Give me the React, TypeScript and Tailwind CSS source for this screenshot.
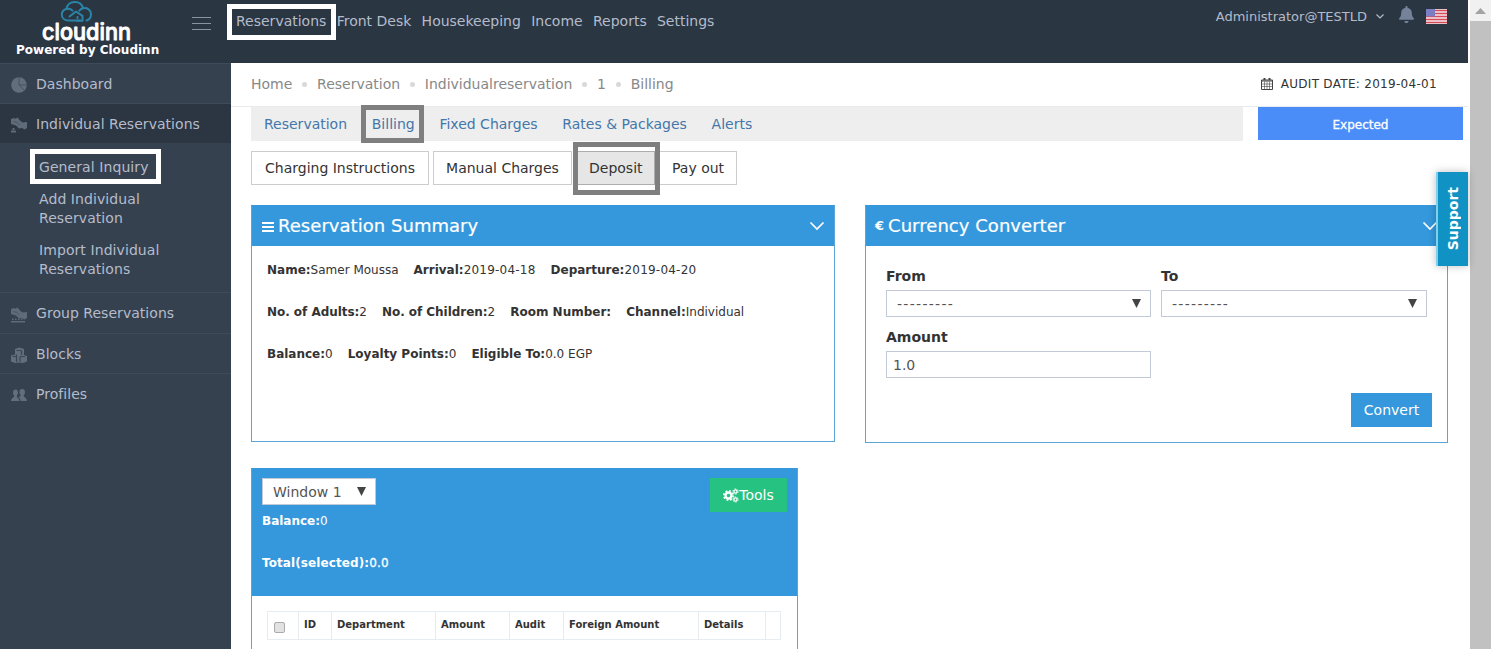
import { FaBell } from "react-icons/fa"

const navLinks = ["Reservations", "Front Desk", "Housekeeping", "Income", "Reports", "Settings"]
const crumbs = ["Home", "Reservation", "Individualreservation", "1", "Billing"]
const tabs = ["Reservation", "Billing", "Fixed Charges", "Rates & Packages", "Alerts"]

const summary = [
    [["Name:", "Samer Moussa"], ["Arrival:", "2019-04-18"], ["Departure:", "2019-04-20"]],
    [["No. of Adults:", "2"], ["No. of Children:", "2"], ["Room Number:", ""], ["Channel:", "Individual"]],
    [["Balance:", "0"], ["Loyalty Points:", "0"], ["Eligible To:", "0.0 EGP"]],
]

function Logo() {
    return (
        <svg width="100" height="43" viewBox="0 0 100 43" className="block overflow-visible">
            <g fill="none" stroke="#2a84a8" strokeWidth="2" strokeLinecap="round" strokeLinejoin="round">
                <path d="M45 20.500H33.500C29.500 20.500 26.800 18 26.800 14.800c0-3 2-5.200 4.800-5.800C32 4.700 35.500 2 39.800 2c4.200 0 7.200 2.300 8.300 6.200 4.300-.8 7.900 1.800 7.900 6 0 3.200-1.800 5.500-4.500 6.300" />
                <path d="M31.500 9c2.300-.6 4.500 0 6 1.700" />
                <path d="M48.100 8.200c-1.600.4-2.900 1.200-3.800 2.500" />
                <path d="M34.500 16.500l6.500-5 6.500 4.300v5H42" />
                <path d="M42.500 17v1" />
            </g>
            <text x="7" y="39.500" textLength="89" lengthAdjust="spacingAndGlyphs" fill="#fff" stroke="#fff" strokeWidth=".9" strokeLinejoin="round" fontFamily="Inter, sans-serif" fontWeight="500" fontSize="22.500">cloudinn</text>
        </svg>
    )
}

function Chevron(props: any) {
    return (
        <svg width="16" height="10" viewBox="0 0 16 10" className={props.className}>
            <path d="M1.500 1.500l6.500 6.500 6.500-6.500" fill="none" stroke="#fff" strokeWidth="1.700" />
        </svg>
    )
}

function PieIcon() {
    return (
        <svg width="16" height="16" viewBox="0 0 16 16">
            <circle cx="8" cy="8" r="7.800" fill="#626e7b" />
            <path d="M8 0v8l5.500 5.500M8 8h8" fill="none" stroke="#465260" strokeWidth="1" />
        </svg>
    )
}

function HandshakeIcon(props: any) {
    return (
        <svg width="16" height="16" viewBox="0 0 16 16" fill="#5f6b78">
            <path d="M0 2l3-1 1.500.8L6.500.5l2.500 3 2.500 2L16 5v6l-2.500 1.500-2.500-1.500-3 .5-3-3L0 7z" />
            <path d="M2.500 4.500l3.500 1 2.500 2.500" fill="none" stroke="#44505e" strokeWidth=".8" />
            {props.group
                ? <path d="M1 11.500h1.500V13H1zm3 0h1.500V13H4zm3 0h1.500V13H7zm3 0h1.500V13H10zM0 14h14v1.500H0z" />
                : <path d="M1.500 11h2v2h-2zM0 13.500h5v2H0z" />}
        </svg>
    )
}

function CubesIcon() {
    return (
        <svg width="16" height="16" viewBox="0 0 16 16">
            <path d="M4 2l4-1.500L13 2v6l3 1v5.500L12 16l-4-.5-4 .5-4-1.500V8.500l4-1z" fill="#626e7b" />
            <path d="M5.500 3.500h5M10.500 3.500V8M5.500 7.500V15M1.500 9.500h4M9 9.500v5M9 9.500h5" fill="none" stroke="#3b4654" strokeWidth="1.200" />
        </svg>
    )
}

function UsersIcon() {
    return (
        <svg width="16" height="12" viewBox="0 0 16 12" fill="#626e7b">
            <path d="M2 3.500C2 1.500 3 .5 4.500.5S7 1.500 7 3.500c0 1.500-.7 2.500-1.200 3 0 2.500 2.200 2 2.700 5.500H0c0-3 3.200-3 3.200-5.500C2.500 6 2 5 2 3.500z" />
            <path d="M8.500 3c0-2 1-3 2.700-3S14 1 14 3c0 1.600-.7 2.800-1.300 3.300 0 2.700 3.300 2.200 3.300 5.700H9.500c0-2.500-1.500-3.200-2-4 1.500-.5 2.300-.7 2.300-1.700C9 5.800 8.500 4.600 8.500 3z" />
        </svg>
    )
}

function CogsIcon() {
    return (
        <svg width="16" height="15" viewBox="0 0 16 15" fill="none" stroke="#fff">
            <circle cx="5.500" cy="7.500" r="3" strokeWidth="2.400" />
            <circle cx="5.500" cy="7.500" r="4.700" strokeWidth="1.600" strokeDasharray="1.850 1.840" />
            <circle cx="12.500" cy="3.500" r="1.600" strokeWidth="1.300" />
            <circle cx="12.500" cy="3.500" r="2.600" strokeWidth="1" strokeDasharray="1.360 1.360" />
            <circle cx="12.500" cy="11.500" r="1.600" strokeWidth="1.300" />
            <circle cx="12.500" cy="11.500" r="2.600" strokeWidth="1" strokeDasharray="1.360 1.360" />
        </svg>
    )
}

function SideItem(props: any) {
    return (
        <div className={`flex items-center border-t border-[#3f4b5a] pl-[11px] ${props.className}`}>
            <span className="mr-[9px] w-4 pt-[3px]">{props.icon}</span>
            <span className="tracking-[0.040px]">{props.label}</span>
        </div>
    )
}

function PanelHeader(props: any) {
    return (
        <div className="flex h-10 items-center bg-[#3598dc] pl-[9px] pr-[9px] text-lg text-white">
            {props.icon}
            <span className="tracking-[0.040px] [-webkit-text-stroke:0.200px_white]">{props.title}</span>
            <Chevron className="ml-auto" />
        </div>
    )
}

function Select(props: any) {
    return (
        <div className={`flex h-[27px] items-center border border-[#c2cad8] bg-white pl-[10px] text-[#555] ${props.className}`}>
            <span>{props.children}</span>
            <svg width="9" height="9" viewBox="0 0 9 9" className="mb-px ml-auto"><path d="M0 0h9L4.500 9z" fill="#444" /></svg>
        </div>
    )
}

function Flag() {
    return (
        <svg width="21" height="15" viewBox="0 0 21 15">
            <path d="M0 0h21v15H0z" fill="#f6e9ea" />
            <path d="M0 1.500h21M0 4.500h21M0 7.500h21M0 10.500h21M0 13.500h21" stroke="#d34a5a" strokeWidth="1.500" />
            <path d="M0 0h9v7.500H0z" fill="#7d7dc4" />
        </svg>
    )
}

function Calendar() {
    return (
        <svg width="12" height="13" viewBox="0 0 12 13" fill="none" stroke="#444">
            <path d="M.5 3h11v9.500H.5zM.5 4h11" />
            <path d="M3.500 1v2M8.500 1v2" strokeWidth="2" />
            <path d="M3.500 4.500V12M6 4.500V12M8.500 4.500V12M1 7h10M1 9.500h10" strokeWidth=".6" />
        </svg>
    )
}

export default function App() {
    return (
        <div className="flex h-[649px] w-[1491px] overflow-hidden bg-white font-['DejaVu_Sans',Verdana,sans-serif] text-sm text-[#333]">
            <div className="relative flex w-[1468px] flex-col">
                <header className="flex h-[63px] shrink-0 bg-[#2b3643] text-[#b4bccb]">
                    <div className="w-[192px]">
                        <div className="pl-[35px]"><Logo /></div>
                        <div className="pl-4 text-xs/[15px] font-bold text-white">Powered by Cloudinn</div>
                    </div>
                    <div className="mt-[17px] flex w-[19px] flex-col gap-[5px]">
                        <span className="h-px bg-[#8995a3]" />
                        <span className="h-px bg-[#8995a3]" />
                        <span className="h-px bg-[#8995a3]" />
                    </div>
                    <nav className="ml-[25px] mt-[11px] flex h-5 gap-[10.300px] whitespace-nowrap">
                        {navLinks.map((link, i) => (
                            <span key={link} className="relative">
                                {link}
                                {i === 0 && <span className="absolute -left-[9px] -top-[7px] h-9 w-[109px] border-[5px] border-white" />}
                            </span>
                        ))}
                    </nav>
                    <div className="ml-auto mr-[21px] flex h-8 items-center text-[13px]">
                        <span className="mt-[2px]">Administrator@TESTLD</span>
                        <svg width="8" height="5" viewBox="0 0 8 5" className="ml-[9px]"><path d="M.5.5L4 4 7.500.5" fill="none" stroke="#b4bccb" strokeWidth="1.200" /></svg>
                        <FaBell className="mb-[3px] ml-[14px] h-[17px] w-[17px] text-[#75839a]" />
                        <span className="ml-[11px]"><Flag /></span>
                    </div>
                </header>

                <div className="flex flex-1">
                    <aside className="w-[231px] shrink-0 bg-[#364150] text-[#b4bccb]">
                        <SideItem label="Dashboard" icon={<PieIcon />} className="h-10" />
                        <SideItem label="Individual Reservations" icon={<HandshakeIcon />} className="h-10 bg-[#2c3542]" />
                        <div className="flex h-[149px] flex-col gap-[13px] pl-[39px] pt-[15px] leading-[19px] tracking-[0.080px]">
                            <div className="relative">
                                General Inquiry
                                <span className="absolute -left-[9px] -top-[9px] h-[35px] w-[131px] border-[5px] border-white" />
                            </div>
                            <div>Add Individual<br />Reservation</div>
                            <div>Import Individual<br />Reservations</div>
                        </div>
                        <SideItem label="Group Reservations" icon={<HandshakeIcon group />} className="h-[41px]" />
                        <SideItem label="Blocks" icon={<CubesIcon />} className="h-10" />
                        <SideItem label="Profiles" icon={<UsersIcon />} className="h-10" />
                    </aside>

                    <main className="flex-1">
                        <div className="flex h-11 items-center justify-between border-b border-[#e8ebee] pb-[2px] pl-5 pr-[31px] text-[#888]">
                            <div className="flex items-center">
                                {crumbs.map((crumb, i) => (
                                    <span key={crumb} className="flex items-center">
                                        {i > 0 && <span className="ml-[10px] mr-[9.700px] mt-[2px] h-[5px] w-[5px] rounded-full bg-[#d9d9d9]" />}
                                        {crumb}
                                    </span>
                                ))}
                            </div>
                            <div className="flex items-center text-xs tracking-[0.300px] text-[#333]">
                                <span className="mr-2"><Calendar /></span>
                                AUDIT DATE: 2019-04-01
                            </div>
                        </div>

                        <div className="flex h-[34px] pl-5">
                            <div className="flex w-[992px] items-center gap-[24.700px] bg-[#eee] pl-[13px] text-[#4477aa]">
                                {tabs.map((tab) => (
                                    <span key={tab} className="relative">
                                        {tab}
                                        {tab === "Billing" && <span className="absolute -left-[11px] -top-[9px] h-[38px] w-[63px] border-[5px] border-[#7f7f7f]" />}
                                    </span>
                                ))}
                            </div>
                            <div className="ml-[15px] flex h-[33px] w-[205px] items-center justify-center bg-[#4b8df8] pt-[2px] text-xs text-white [-webkit-text-stroke:0.300px_white]">Expected</div>
                        </div>

                        <div className="flex gap-1 whitespace-nowrap pl-5 pt-[10px] *:h-[34px] *:border *:px-3 *:leading-8">
                            <button className="w-[178px] border-[#ccc]">Charging Instructions</button>
                            <button className="w-[139px] border-[#ccc]">Manual Charges</button>
                            <button className="relative w-[79px] border-[#adadad] bg-[#e6e6e6]">
                                Deposit
                                <span className="absolute -left-1 -top-[10px] h-[53px] w-[87px] border-[5px] border-[#7f7f7f]" />
                            </button>
                            <button className="w-[78px] border-[#ccc]">Pay out</button>
                        </div>

                        <div className="flex items-start gap-[30px] pl-5 pt-5">
                            <section className="h-[237px] w-[584px] border border-[#5aa5d6] border-t-[#3598dc]">
                                <PanelHeader title="Reservation Summary" icon={
                                    <svg width="13" height="10" viewBox="0 0 13 10" className="mr-[4px] mt-px"><path d="M1 1h12M1 5h12M1 9h12" stroke="#fff" strokeWidth="2" /></svg>
                                } />
                                <div className="pl-[15px] pt-[3px] text-xs leading-[42px]">
                                    {summary.map((row, i) => (
                                        <div key={i} className="flex gap-[15px]">
                                            {row.map(([label, value]) => (
                                                <span key={label}>
                                                    <b className={label.startsWith("No.") ? "tracking-[-0.040px]" : ""}>{label}</b>
                                                    <span className={value.startsWith("2019") ? "tracking-[0.220px]" : ""}>{value}</span>
                                                </span>
                                            ))}
                                        </div>
                                    ))}
                                </div>
                            </section>

                            <section className="h-[238px] w-[583px] border border-[#5aa5d6] border-t-[#3598dc]">
                                <PanelHeader title="Currency Converter" icon={<b className="mr-[4px] text-[13px]">€</b>} />
                                <div className="grid grid-cols-[265px_266px] gap-x-[10px] px-5 pt-5">
                                    <b className="h-6">From</b>
                                    <b className="h-6">To</b>
                                    <Select className="pr-[9px]"><span className="tracking-[1.300px]">---------</span></Select>
                                    <Select className="pr-[9px]"><span className="tracking-[1.300px]">---------</span></Select>
                                    <b className="mt-[10px] h-6">Amount</b>
                                    <span />
                                    <div className="h-[27px] border border-[#c2cad8] pl-[6px] leading-[26px] text-[#555]">1.0</div>
                                </div>
                                <button className="ml-auto mr-[15px] mt-[15px] block h-[34px] w-[81px] bg-[#3598dc] text-white">Convert</button>
                            </section>
                        </div>

                        <section className="ml-5 mt-[25px] h-[220px] w-[547px] border border-[#5aa5d6] border-t-[#3598dc]">
                            <div className="flex h-[127px] justify-between bg-[#3598dc] px-[10px] pt-[9px] text-xs text-white">
                                <div>
                                    <Select className="w-[114px] pr-[9px] text-sm">Window 1</Select>
                                    <div className="mt-[8px]"><b>Balance:</b>0</div>
                                    <div className="mt-[26px]"><b className="tracking-[0.100px]">Total(selected):</b><span className="tracking-[0.200px] [-webkit-text-stroke:0.300px_white]">0.0</span></div>
                                </div>
                                <button className="flex h-[34px] w-[77px] items-center justify-center bg-[#26c281] text-sm">
                                    <CogsIcon />Tools
                                </button>
                            </div>
                            <table className="ml-[15px] mt-[15px] w-[514px] table-fixed border-collapse text-left text-[10px] *:*:*:border *:*:*:border-[#e7ecf1]">
                                <thead>
                                    <tr className="h-7 *:p-0 *:pl-[5px]">
                                        <th className="w-[31px]"><span className="ml-px mt-[3px] block h-[11px] w-[11px] rounded-[2px] border border-[#aaa] bg-[#e2e2e2]" /></th>
                                        <th className="w-[33px]">ID</th>
                                        <th className="w-[104px]">Department</th>
                                        <th className="w-[74px]">Amount</th>
                                        <th className="w-[54px]">Audit</th>
                                        <th className="w-[135px]">Foreign Amount</th>
                                        <th className="w-[67px]">Details</th>
                                        <th></th>
                                    </tr>
                                </thead>
                            </table>
                        </section>
                    </main>
                </div>

                <div className="absolute right-0 top-[172px] flex h-[94px] w-8 items-center justify-center border-l-2 border-[#7fd0ee] bg-[#1192c4] shadow-[0_0_8px_rgba(0,0,0,0.25)]">
                    <span className="rotate-180 font-bold text-white [writing-mode:vertical-rl]">Support</span>
                </div>
            </div>

            <div className="ml-auto flex w-[21px] flex-col bg-[#c1c1c1]">
                <div className="flex h-[21px] items-center justify-center bg-[#f1f1f1]">
                    <svg width="11" height="6" viewBox="0 0 11 6"><path d="M0 6L5.500 0 11 6z" fill="#a3a3a3" /></svg>
                </div>
            </div>
        </div>
    )
}
